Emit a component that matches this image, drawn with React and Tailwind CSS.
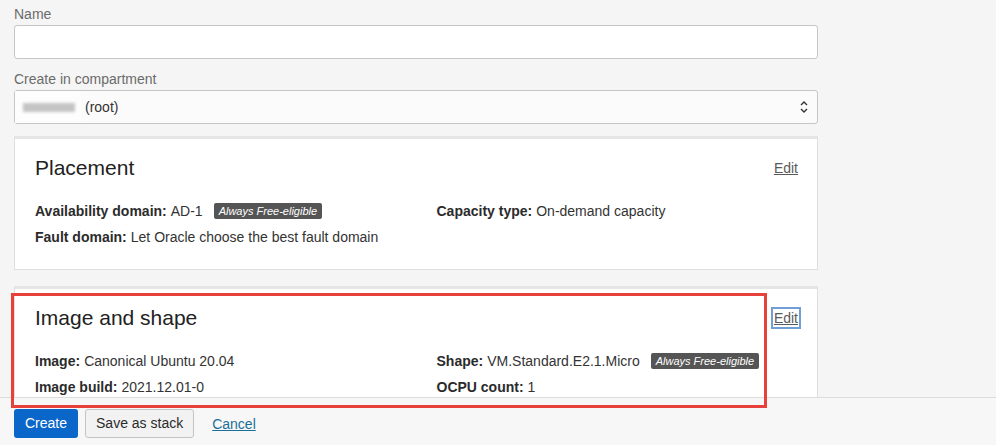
import React from 'react';

const font = { fontFamily: '"Liberation Sans", Arial, Helvetica, sans-serif' };

const Badge = ({ children }) => (
  <span className="ml-[11px] inline-flex h-[16px] items-center rounded-[2px] bg-[#555555] px-[5px] text-[11px] italic leading-none text-white">
    {children}
  </span>
);

const Field = ({ label, value, badge }) => (
  <div className="flex h-[20px] items-center text-[14px] leading-[20px] text-[#333]">
    <span className="font-bold text-[#2b2b2b]">{label}</span>
    <span className="ml-[4px]">{value}</span>
    {badge && <Badge>{badge}</Badge>}
  </div>
);

const Card = ({ title, left, right, focused, className = '' }) => (
  <div className={`w-[804px] border border-[#dedede] border-t-[3px] border-t-[#e6e6e6] bg-white pl-[20px] pr-[19px] pt-[14px] ${className}`}>
    <div className="flex items-start justify-between">
      <h2 className="text-[21px] leading-[30px] text-[#222]">{title}</h2>
      <a
        href="#"
        className={`mt-[6px] text-[14px] leading-[18px] text-[#5a5a5a] underline ${
          focused ? 'outline-2 outline-[#6f9fd6] -mr-[1px] px-[1px]' : ''
        }`}
      >
        Edit
      </a>
    </div>
    <div className="mt-[18px] grid grid-cols-2 gap-x-10 gap-y-[6px]">
      <div className="flex flex-col gap-[6px]">
        {left.map((f) => (
          <Field key={f.label} {...f} />
        ))}
      </div>
      <div className="flex flex-col gap-[6px]">
        {right.map((f) => (
          <Field key={f.label} {...f} />
        ))}
      </div>
    </div>
  </div>
);

const Chevrons = () => (
  <svg width="10" height="14" viewBox="0 0 10 14" fill="none" stroke="#333" strokeWidth="1.4">
    <path d="M2 5 L5 2 L8 5" />
    <path d="M2 9 L5 12 L8 9" />
  </svg>
);

export default function App() {
  return (
    <div className="relative flex h-[445px] w-full flex-col overflow-hidden bg-[#f5f5f5]" style={font}>
      <div className="flex-1 overflow-hidden pl-[14px] pt-[6px]">
        <label className="block text-[14px] leading-[16px] text-[#6b6b6b]">Name</label>
        <input
          type="text"
          className="mt-[3px] block h-[34px] w-[804px] rounded-[3px] border border-[#c6c6c6] bg-white"
        />
        <label className="mt-[12px] block text-[14px] leading-[16px] text-[#6b6b6b]">Create in compartment</label>
        <div className="mt-[3px] flex h-[34px] w-[804px] items-center rounded-[3px] border border-[#c6c6c6] bg-[#fbfbfb] pr-[8px]">
          <div className="flex h-full w-[66px] items-center bg-[#fdfdfd] pl-[8px]">
            <div className="h-[9px] w-[52px] bg-[#c4c4c4] blur-[1.5px]" />
          </div>
          <span className="ml-[4px] text-[14px] text-[#333]">(root)</span>
          <span className="ml-auto">
            <Chevrons />
          </span>
        </div>

        <Card
          className="mt-[12px] h-[134px]"
          title="Placement"
          left={[
            { label: 'Availability domain:', value: 'AD-1', badge: 'Always Free-eligible' },
            { label: 'Fault domain:', value: 'Let Oracle choose the best fault domain' },
          ]}
          right={[{ label: 'Capacity type:', value: 'On-demand capacity' }]}
        />
        <Card
          className="mt-[16px] h-[134px]"
          title="Image and shape"
          focused
          left={[
            { label: 'Image:', value: 'Canonical Ubuntu 20.04' },
            { label: 'Image build:', value: '2021.12.01-0' },
          ]}
          right={[
            { label: 'Shape:', value: 'VM.Standard.E2.1.Micro', badge: 'Always Free-eligible' },
            { label: 'OCPU count:', value: '1' },
          ]}
        />
      </div>

      <div className="flex h-[48px] shrink-0 items-start gap-[7px] border-t border-[#dcdcdc] bg-[#f7f7f7] pl-[14px] pt-[11px]">
        <button className="h-[29px] rounded-[3px] bg-[#0a66c8] px-[11px] text-[14px] text-white">Create</button>
        <button className="h-[29px] rounded-[3px] border border-[#c4c4c4] bg-[#f2f2f2] px-[10px] text-[14px] text-[#2b2b2b]">
          Save as stack
        </button>
        <a href="#" className="ml-[11px] mt-[6px] text-[14px] leading-[18px] text-[#1b6e98] underline">
          Cancel
        </a>
      </div>

      {/* annotation box */}
      <div className="pointer-events-none absolute left-[11px] top-[293px] h-[115px] w-[756px] border-[3px] border-[#e8403a]" />
    </div>
  );
}
